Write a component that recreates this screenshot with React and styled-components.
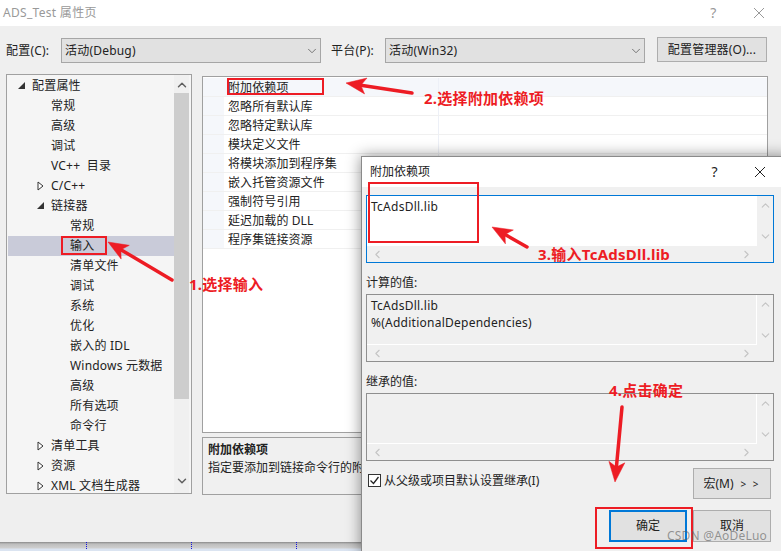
import React from 'react';
import styled, { createGlobalStyle } from 'styled-components';
import { ChevronDown, ChevronUp, ChevronLeft, ChevronRight } from 'lucide-react';

const GlobalStyle = createGlobalStyle`
  html, body {
    margin: 0;
    padding: 0;
    background: #efefef;
  }
  * {
    box-sizing: border-box;
  }
`;

const Page = styled.div`
  width: 781px;
  height: 551px;
  position: relative;
  overflow: hidden;
  display: flex;
  flex-direction: column;
  background: #efefef;
  color: #222;
  font-family: "Noto Sans", "Noto Sans CJK SC", sans-serif;
  font-size: 12px;
  line-height: 16px;
`;

const TitleBar = styled.div`
  height: 26px;
  flex: none;
  display: flex;
  align-items: center;
  background: #fff;
  color: #999;
  font-size: 12px;
  letter-spacing: 0.3px;
  padding-left: 3px;
`;

const TitleText = styled.span`
  flex: 1;
`;

const CaptionButton = styled.span`
  width: 45px;
  text-align: center;
  font-size: 14px;
  display: flex;
  justify-content: center;
  align-items: center;
`;

const Toolbar = styled.div`
  display: flex;
  align-items: center;
  height: 25px;
  margin-top: 12px;
  padding-left: 6px;
`;

const FieldLabel = styled.label`
  width: ${p => p.$width}px;
  flex: none;
  margin-left: ${p => p.$gap || 0}px;
  letter-spacing: 0.2px;
`;

const Select = styled.div`
  width: 260px;
  height: 25px;
  flex: none;
  display: flex;
  align-items: center;
  justify-content: space-between;
  background: #e1e1e1;
  border: 1px solid #a6a6a6;
  padding: 0 1px 0 3px;
  letter-spacing: 0.2px;
  svg {
    color: #666;
  }
`;

const Button = styled.button`
  width: ${p => p.$width}px;
  height: ${p => p.$height}px;
  flex: none;
  background: #e1e1e1;
  border: ${p => p.$primary ? '2px solid #0078d7' : '1px solid #adadad'};
  color: #222;
  font: inherit;
  padding: 0;
`;

const ManagerButton = styled(Button)`
  margin-left: 12px;
  margin-top: -2px;
  letter-spacing: 0.2px;
`;

const MacroArrows = styled.span`
  margin-left: 7px;
  font-size: 10px;
  letter-spacing: 2px;
`;

const Panels = styled.div`
  display: flex;
  gap: 10px;
  margin-top: 11px;
  padding-left: 6px;
`;

const Tree = styled.div`
  width: 186px;
  height: 420px;
  flex: none;
  display: flex;
  background: #f5f5f5;
  border: 1px solid #a0a0a0;
  overflow: hidden;
`;

const TreeList = styled.div`
  flex: 1;
  padding: 1px 0 0 1px;
  overflow: hidden;
`;

const TreeRow = styled.div`
  height: 20px;
  display: flex;
  align-items: center;
  position: relative;
  padding-left: ${p => 24 + p.$level * 19}px;
  background: ${p => p.$selected ? '#c9cbd9' : 'transparent'};
  letter-spacing: 0.2px;
  white-space: pre;
`;

const Expander = styled.svg`
  position: absolute;
  left: ${p => 9 + p.$level * 19}px;
  top: 5px;
`;

const TreeScroll = styled.div`
  width: 15px;
  flex: none;
  margin-right: 2px;
  display: flex;
  flex-direction: column;
  align-items: center;
  justify-content: space-between;
  background: #f0f0f0;
  position: relative;
  color: #606060;
  padding: 3px 0 5px;
`;

const ScrollColumnBox = styled.div`
  display: flex;
  flex-direction: column;
  align-items: center;
  justify-content: space-between;
  background: #f0f0f0;
  color: #c4c4c4;
  padding: 3px 0;
`;

const ScrollThumb = styled.div`
  position: absolute;
  left: 0;
  right: 0;
  top: 18px;
  height: 306px;
  background: #cdcdcd;
`;

const RightColumn = styled.div`
  width: 566px;
  flex: none;
  display: flex;
  flex-direction: column;
  gap: 4px;
  padding-top: 2px;
`;

const PropGrid = styled.div`
  height: 357px;
  background: #fff;
  border: 1px solid #a0a0a0;
  padding-top: 1px;
`;

const PropRow = styled.div`
  height: 19px;
  display: flex;
  border-bottom: 1px solid #f0f0f0;
  background: ${p => p.$selected ? '#f5f7fb' : 'transparent'};
`;

const PropGutter = styled.div`
  width: 21px;
  flex: none;
  background: #f5f7fb;
`;

const PropName = styled.div`
  width: 215px;
  flex: none;
  padding: 1px 0 0 4px;
  line-height: 17px;
  letter-spacing: 0.1px;
  border-right: 1px solid #edf0f7;
`;

const Description = styled.div`
  height: 58px;
  background: #f0f0f0;
  border: 1px solid #a0a0a0;
  padding: 4px 5px;
  white-space: nowrap;
  overflow: hidden;
`;

const DescTitle = styled.div`
  font-weight: 700;
  margin-bottom: 2px;
`;

const StatusStrip = styled.div`
  height: 9px;
  margin-top: auto;
  flex: none;
  background: linear-gradient(#8a8a8a 0, #bdbdbd 2px, #cfcfcf 6px, #dbe4f1 7px);
  display: flex;
  gap: 104px;
  padding-left: 86px;
`;

const StatusDot = styled.i`
  width: 1px;
  height: 7px;
  background: repeating-linear-gradient(#1414e0 0 1px, transparent 1px 2px);
`;

const Dialog = styled.div`
  position: absolute;
  left: 361px;
  top: 156px;
  width: 430px;
  height: 400px;
  display: flex;
  flex-direction: column;
  background: #f0f0f0;
  border-top: 1px solid #8a8a8a;
  border-left: 1px solid #8a8a8a;
  box-shadow: 0 0 14px rgba(0, 0, 0, 0.45);
`;

const DialogTitle = styled.div`
  height: 30px;
  flex: none;
  width: 420px;
  display: flex;
  align-items: center;
  padding-left: 8px;
  background: #fff;
  color: #222;
`;

const DialogBody = styled.div`
  width: 412px;
  padding: 8px 0 0 4px;
  display: flex;
  flex-direction: column;
`;

const ValueBox = styled.div`
  height: 68px;
  display: grid;
  grid-template-columns: 1fr 16px;
  grid-template-rows: 1fr 16px;
  border: ${p => p.$focus ? '1px solid #0078d7' : '1px solid #8f8f8f'};
  background: ${p => p.$focus ? '#fff' : '#f0f0f0'};
`;

const ValueText = styled.div`
  padding: 2px 4px;
  line-height: 17px;
  letter-spacing: 0.25px;
  border-right: ${p => p.$focus ? 0 : '1px solid #fff'};
  border-bottom: ${p => p.$focus ? 0 : '1px solid #fff'};
`;

const HScroll = styled.div`
  grid-column: 1 / 3;
  display: flex;
  justify-content: space-between;
  align-items: center;
  padding: 0 20px 0 4px;
  background: #f0f0f0;
  color: #c4c4c4;
`;

const SectionLabel = styled.div`
  height: 31px;
  padding-top: 12px;
`;

const OptionsRow = styled.div`
  display: flex;
  align-items: center;
  justify-content: space-between;
  margin-top: 7px;
  padding: 0 3px 0 2px;
`;

const CheckLabel = styled.label`
  display: flex;
  align-items: center;
  gap: 3px;
  margin-top: -6px;
`;

const CheckBox = styled.span`
  width: 13px;
  height: 13px;
  display: flex;
  align-items: center;
  justify-content: center;
  background: #fff;
  border: 1px solid #333;
`;

const ActionsRow = styled.div`
  display: flex;
  justify-content: flex-end;
  gap: 6px;
  margin-top: 11px;
  padding-right: 3px;
`;

const Marker = styled.div`
  position: absolute;
  left: ${p => p.$x}px;
  top: ${p => p.$y}px;
  width: ${p => p.$w}px;
  height: ${p => p.$h}px;
  border: 2px solid #ed1c24;
  pointer-events: none;
`;

const Note = styled.div`
  position: absolute;
  left: ${p => p.$x}px;
  top: ${p => p.$y}px;
  color: #ed1c24;
  font-size: 15px;
  line-height: 20px;
  font-weight: 700;
  letter-spacing: 0.25px;
  white-space: nowrap;
`;

const ArrowLayer = styled.svg`
  position: absolute;
  left: 0;
  top: 0;
`;

const Watermark = styled.div`
  position: absolute;
  left: 667px;
  top: 528px;
  color: rgba(90, 90, 90, 0.6);
  font-size: 12px;
  letter-spacing: 0.2px;
  white-space: nowrap;
`;

const treeRows = [
  { label: '配置属性', level: 0, open: true },
  { label: '常规', level: 1 },
  { label: '高级', level: 1 },
  { label: '调试', level: 1 },
  { label: 'VC++  目录', level: 1 },
  { label: 'C/C++', level: 1, closed: true },
  { label: '链接器', level: 1, open: true },
  { label: '常规', level: 2 },
  { label: '输入', level: 2, selected: true },
  { label: '清单文件', level: 2 },
  { label: '调试', level: 2 },
  { label: '系统', level: 2 },
  { label: '优化', level: 2 },
  { label: '嵌入的 IDL', level: 2 },
  { label: 'Windows 元数据', level: 2 },
  { label: '高级', level: 2 },
  { label: '所有选项', level: 2 },
  { label: '命令行', level: 2 },
  { label: '清单工具', level: 1, closed: true },
  { label: '资源', level: 1, closed: true },
  { label: 'XML 文档生成器', level: 1, closed: true },
];

const propRows = ['附加依赖项', '忽略所有默认库', '忽略特定默认库', '模块定义文件', '将模块添加到程序集', '嵌入托管资源文件', '强制符号引用', '延迟加载的 DLL', '程序集链接资源'];

const markers = [
  { x: 227, y: 78, w: 97, h: 17 },
  { x: 61, y: 236, w: 46, h: 19 },
  { x: 368, y: 182, w: 111, h: 61 },
  { x: 595, y: 507, w: 98, h: 42 },
];

const notes = [
  { x: 189, y: 274, text: '1.选择输入' },
  { x: 424, y: 88, text: '2.选择附加依赖项' },
  { x: 538, y: 244, text: '3.输入TcAdsDll.lib' },
  { x: 609, y: 380, text: '4.点击确定' },
];

const arrows = [
  { x1: 172, y1: 280, x2: 108, y2: 242 },
  { x1: 412, y1: 93, x2: 346, y2: 83 },
  { x1: 527, y1: 247, x2: 492, y2: 227 },
  { x1: 622, y1: 407, x2: 615, y2: 482 },
];

function Arrow({ x1, y1, x2, y2 }) {
  const len = Math.hypot(x2 - x1, y2 - y1);
  const ux = (x2 - x1) / len;
  const uy = (y2 - y1) / len;
  const bx = x2 - ux * 20;
  const by = y2 - uy * 20;
  const nx = -uy * 8;
  const ny = ux * 8;
  const head = `${x2},${y2} ${bx + nx},${by + ny} ${x2 - ux * 15},${y2 - uy * 15} ${bx - nx},${by - ny}`;
  return (
    <g fill="#ed1c24" stroke="#ed1c24">
      <line x1={x1} y1={y1} x2={x2 - ux * 15} y2={y2 - uy * 15} strokeWidth="3.5" strokeLinecap="round" />
      <polygon points={head} strokeWidth="0.5" />
    </g>
  );
}

function Triangle({ level, open }) {
  return (
    <Expander $level={level} width="9" height="10" viewBox="0 0 9 10">
      {open
        ? <polygon points="1,8 8,8 8,1" fill="#333" />
        : <polygon points="2,1 7,5 2,9" fill="#fff" stroke="#333" />}
    </Expander>
  );
}

function ValueField({ focus, lines }) {
  return (
    <ValueBox $focus={focus}>
      <ValueText $focus={focus}>
        {lines.map(line => <div key={line}>{line}</div>)}
      </ValueText>
      <ScrollColumnBox>
        <ChevronUp size={13} strokeWidth={2} />
        <ChevronDown size={13} strokeWidth={2} />
      </ScrollColumnBox>
      <HScroll>
        <ChevronLeft size={13} strokeWidth={2} />
        <ChevronRight size={13} strokeWidth={2} />
      </HScroll>
    </ValueBox>
  );
}

function App() {
  return (
    <Page>
      <GlobalStyle />
      <TitleBar>
        <TitleText>ADS_Test 属性页</TitleText>
        <CaptionButton>?</CaptionButton>
        <CaptionButton>
          <svg width="12" height="12" viewBox="0 0 12 12" stroke="#999" strokeWidth="1"><path d="M1 1l10 10M11 1L1 11" /></svg>
        </CaptionButton>
      </TitleBar>

      <Toolbar>
        <FieldLabel $width={55}>配置(C):</FieldLabel>
        <Select>活动(Debug)<ChevronDown size={14} strokeWidth={1.5} /></Select>
        <FieldLabel $width={54} $gap={10}>平台(P):</FieldLabel>
        <Select>活动(Win32)<ChevronDown size={14} strokeWidth={1.5} /></Select>
        <ManagerButton $width={110} $height={25}>配置管理器(O)...</ManagerButton>
      </Toolbar>

      <Panels>
        <Tree>
          <TreeList>
            {treeRows.map((row, i) => (
              <TreeRow key={i} $level={row.level} $selected={row.selected}>
                {(row.open || row.closed) && <Triangle level={row.level} open={row.open} />}
                {row.label}
              </TreeRow>
            ))}
          </TreeList>
          <TreeScroll>
            <ScrollThumb />
            <ChevronUp size={14} strokeWidth={2.5} />
            <ChevronDown size={14} strokeWidth={2.5} />
          </TreeScroll>
        </Tree>

        <RightColumn>
          <PropGrid>
            {propRows.map((name, i) => (
              <PropRow key={name} $selected={i === 0}>
                <PropGutter />
                <PropName>{name}</PropName>
              </PropRow>
            ))}
          </PropGrid>
          <Description>
            <DescTitle>附加依赖项</DescTitle>
            指定要添加到链接命令行的附加项
          </Description>
        </RightColumn>
      </Panels>

      <StatusStrip>
        <StatusDot />
        <StatusDot />
        <StatusDot />
      </StatusStrip>

      <Dialog>
        <DialogTitle>
          <TitleText>附加依赖项</TitleText>
          <CaptionButton>?</CaptionButton>
          <CaptionButton>
            <svg width="12" height="12" viewBox="0 0 12 12" stroke="#222" strokeWidth="1"><path d="M1 1l10 10M11 1L1 11" /></svg>
          </CaptionButton>
        </DialogTitle>
        <DialogBody>
          <ValueField focus lines={['TcAdsDll.lib']} />
          <SectionLabel>计算的值:</SectionLabel>
          <ValueField lines={['TcAdsDll.lib', '%(AdditionalDependencies)']} />
          <SectionLabel>继承的值:</SectionLabel>
          <ValueField lines={[]} />
          <OptionsRow>
            <CheckLabel>
              <CheckBox>
                <svg width="11" height="11" viewBox="0 0 11 11" fill="none" stroke="#222" strokeWidth="1.3"><path d="M1.5 5.5l3 3 5-6.5" /></svg>
              </CheckBox>
              从父级或项目默认设置继承(I)
            </CheckLabel>
            <Button $width={78} $height={31}>宏(M)<MacroArrows>&gt; &gt;</MacroArrows></Button>
          </OptionsRow>
          <ActionsRow>
            <Button $primary $width={78} $height={32}>确定</Button>
            <Button $width={78} $height={32}>取消</Button>
          </ActionsRow>
        </DialogBody>
      </Dialog>

      {markers.map(m => <Marker key={m.x} $x={m.x} $y={m.y} $w={m.w} $h={m.h} />)}
      <ArrowLayer width="781" height="551">
        {arrows.map(a => <Arrow key={a.x1} {...a} />)}
      </ArrowLayer>
      {notes.map(n => <Note key={n.text} $x={n.x} $y={n.y}>{n.text}</Note>)}
      <Watermark>CSDN @AoDeLuo</Watermark>
    </Page>
  );
}

export default App;
